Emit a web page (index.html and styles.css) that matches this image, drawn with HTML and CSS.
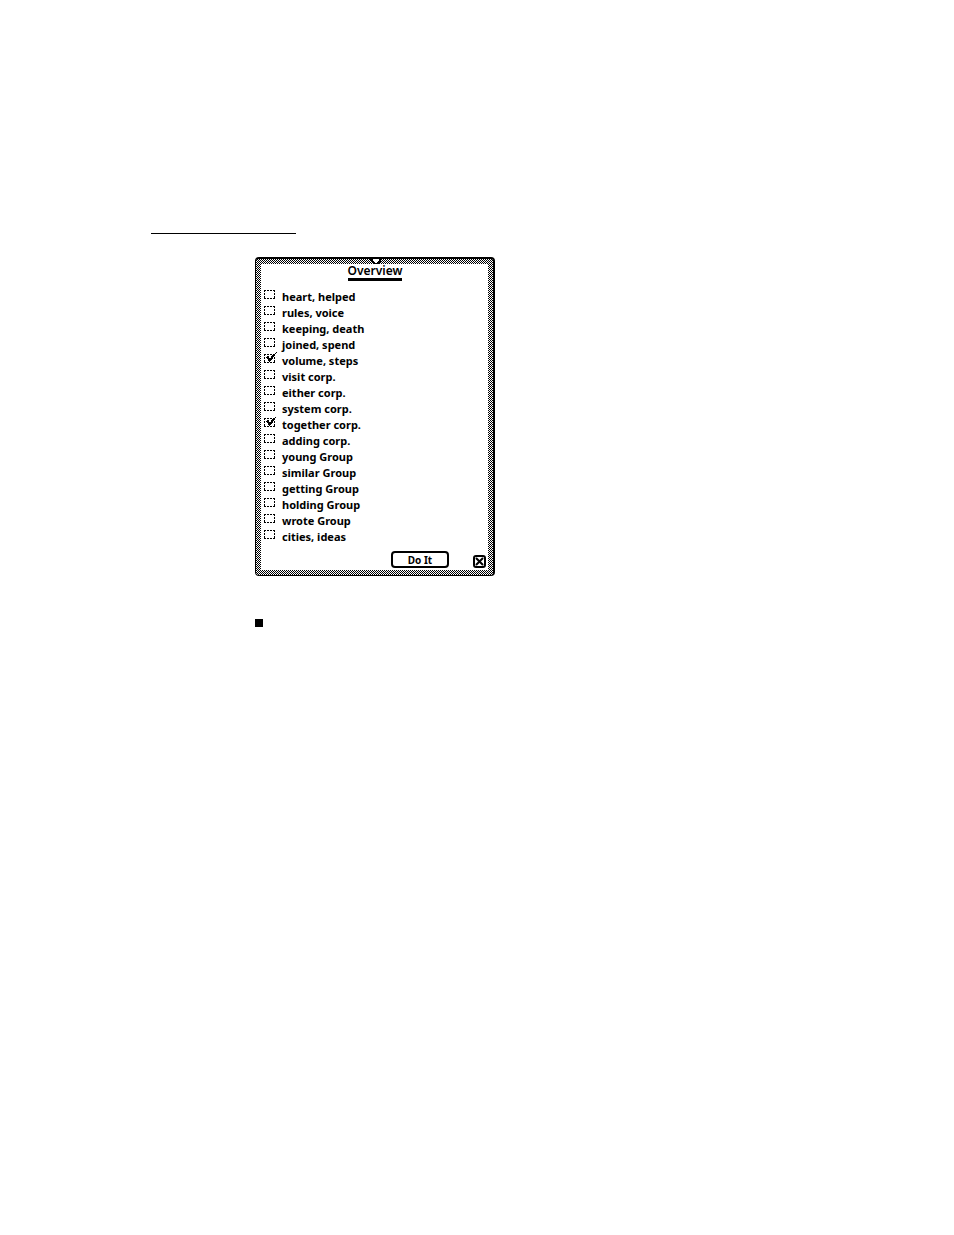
FILE: index.html
```html
<!DOCTYPE html>
<html lang="en">
<head>
<meta charset="utf-8">
<meta name="viewport" content="width=device-width, initial-scale=1">
<title>Overview</title>
<link rel="stylesheet" href="styles.css">
</head>
<body>
<main class="page">
  <hr class="rule">
  <div class="content">
    <form class="dialog">
      <svg class="notch" width="12" height="7" viewBox="0 0 12 7" shape-rendering="crispEdges" aria-hidden="true">
        <path d="M0 0h12v2h-1v2h-1v1h-1v1h-6v-1h-1v-1h-1v-2h-1z"/>
        <path d="M3 1h6v2h-1v1h-1v1h-2v-1h-1v-1h-1z" fill="#fff"/>
      </svg>
      <div class="panel">
        <h1 class="title">Overview</h1>
        <ul class="items">
          <li><label class="item"><input class="box" type="checkbox">heart, helped</label></li>
          <li><label class="item"><input class="box" type="checkbox">rules, voice</label></li>
          <li><label class="item"><input class="box" type="checkbox">keeping, death</label></li>
          <li><label class="item"><input class="box" type="checkbox">joined, spend</label></li>
          <li><label class="item"><input class="box" type="checkbox" checked><svg class="tick" width="12" height="11" viewBox="0 0 12 11" shape-rendering="crispEdges" aria-hidden="true"><path d="M11 0h1v1h-1zM10 1h1v1h-1zM8 2h2v1h-2zM7 3h2v1h-2zM2 4h2v1h-2zM6 4h3v1h-3zM1 5h3v1h-3zM6 5h2v1h-2zM2 6h6v1h-6zM3 7h4v1h-4zM3 8h3v1h-3zM4 9h1v1h-1z"/></svg>volume, steps</label></li>
          <li><label class="item"><input class="box" type="checkbox">visit corp.</label></li>
          <li><label class="item"><input class="box" type="checkbox">either corp.</label></li>
          <li><label class="item"><input class="box" type="checkbox">system corp.</label></li>
          <li><label class="item"><input class="box" type="checkbox" checked><svg class="tick" width="12" height="11" viewBox="0 0 12 11" shape-rendering="crispEdges" aria-hidden="true"><path d="M10 1h1v1h-1zM8 2h2v1h-2zM7 3h2v1h-2zM2 4h2v1h-2zM6 4h3v1h-3zM1 5h3v1h-3zM6 5h2v1h-2zM2 6h6v1h-6zM3 7h4v1h-4zM3 8h3v1h-3zM4 9h1v1h-1z"/></svg>together corp.</label></li>
          <li><label class="item"><input class="box" type="checkbox">adding corp.</label></li>
          <li><label class="item"><input class="box" type="checkbox">young Group</label></li>
          <li><label class="item"><input class="box" type="checkbox">similar Group</label></li>
          <li><label class="item"><input class="box" type="checkbox">getting Group</label></li>
          <li><label class="item"><input class="box" type="checkbox">holding Group</label></li>
          <li><label class="item"><input class="box" type="checkbox">wrote Group</label></li>
          <li><label class="item"><input class="box" type="checkbox">cities, ideas</label></li>
        </ul>
        <div class="actions">
          <button class="do-it" type="button">Do It</button>
          <button class="close" type="button" aria-label="Close">
            <svg width="9" height="9" viewBox="0 0 9 9" aria-hidden="true"><path d="M1 1l7 7M8 1l-7 7" stroke="#000" stroke-width="2"/></svg>
          </button>
        </div>
      </div>
    </form>
    <div class="bullet"></div>
  </div>
</main>
</body>
</html>
```
FILE: styles.css
```css
* {
  box-sizing: border-box;
}

body {
  margin: 0;
  background: #fff;
  color: #000;
  font: bold 11px/16px "Noto Sans", "Open Sans", sans-serif;
}

.page {
  padding: 233px 24px 24px 151px;
}

.rule {
  width: 145px;
  height: 1px;
  margin: 0 0 23px;
  border: 0;
  background: #000;
}

.content {
  padding-left: 104px;
}

.dialog {
  position: relative;
  max-width: 240px;
  padding: 5px;
  border: solid #000;
  border-width: 2px 2px 1px 1px;
  border-radius: 4px;
  background: repeating-conic-gradient(#000 0 25%, #fff 0 50%) 0 0 / 2px 2px;
}

.notch {
  position: absolute;
  top: -1px;
  left: 50%;
  margin-left: -5px;
}

.panel {
  padding: 0 2px 2px 3px;
  background: #fff;
}

.title {
  width: fit-content;
  margin: 0 auto 8px;
  border-bottom: 3px solid #000;
  font-size: 12px;
  font-weight: 600;
  line-height: 14px;
}

.items {
  margin: 0;
  padding: 0;
  list-style: none;
}

.item {
  position: relative;
  display: flex;
  align-items: flex-start;
  gap: 7px;
  height: 16px;
}

.box {
  appearance: none;
  flex: none;
  width: 11px;
  height: 9px;
  margin: 1px 0 0;
  background:
    repeating-linear-gradient(90deg, #000 0 2px, #fff 2px 3px) 0 0 / 100% 1px no-repeat,
    repeating-linear-gradient(90deg, #000 0 2px, #fff 2px 3px) 0 100% / 100% 1px no-repeat,
    repeating-linear-gradient(#000 0 2px, #fff 2px 3px) 0 0 / 1px 100% no-repeat,
    repeating-linear-gradient(#000 0 2px, #fff 2px 3px) 100% 0 / 1px 100% no-repeat;
}

.tick {
  position: absolute;
  top: -1px;
  left: 1px;
}

.actions {
  display: flex;
  justify-content: flex-end;
  align-items: flex-end;
  gap: 24px;
  padding-top: 6px;
}

.do-it {
  width: 58px;
  height: 17px;
  padding: 0;
  border: 2px solid #000;
  border-radius: 4px;
  background: #fff;
  color: #000;
  font: bold 10px/12px "Noto Sans", "Open Sans", sans-serif;
}

.close {
  display: flex;
  align-items: center;
  justify-content: center;
  width: 13px;
  height: 13px;
  padding: 0;
  border: 2px solid #000;
  border-radius: 3px;
  background: #fff;
}

.close svg {
  flex: none;
}

.bullet {
  width: 8px;
  height: 8px;
  margin-top: 43px;
  background: #000;
}
```
